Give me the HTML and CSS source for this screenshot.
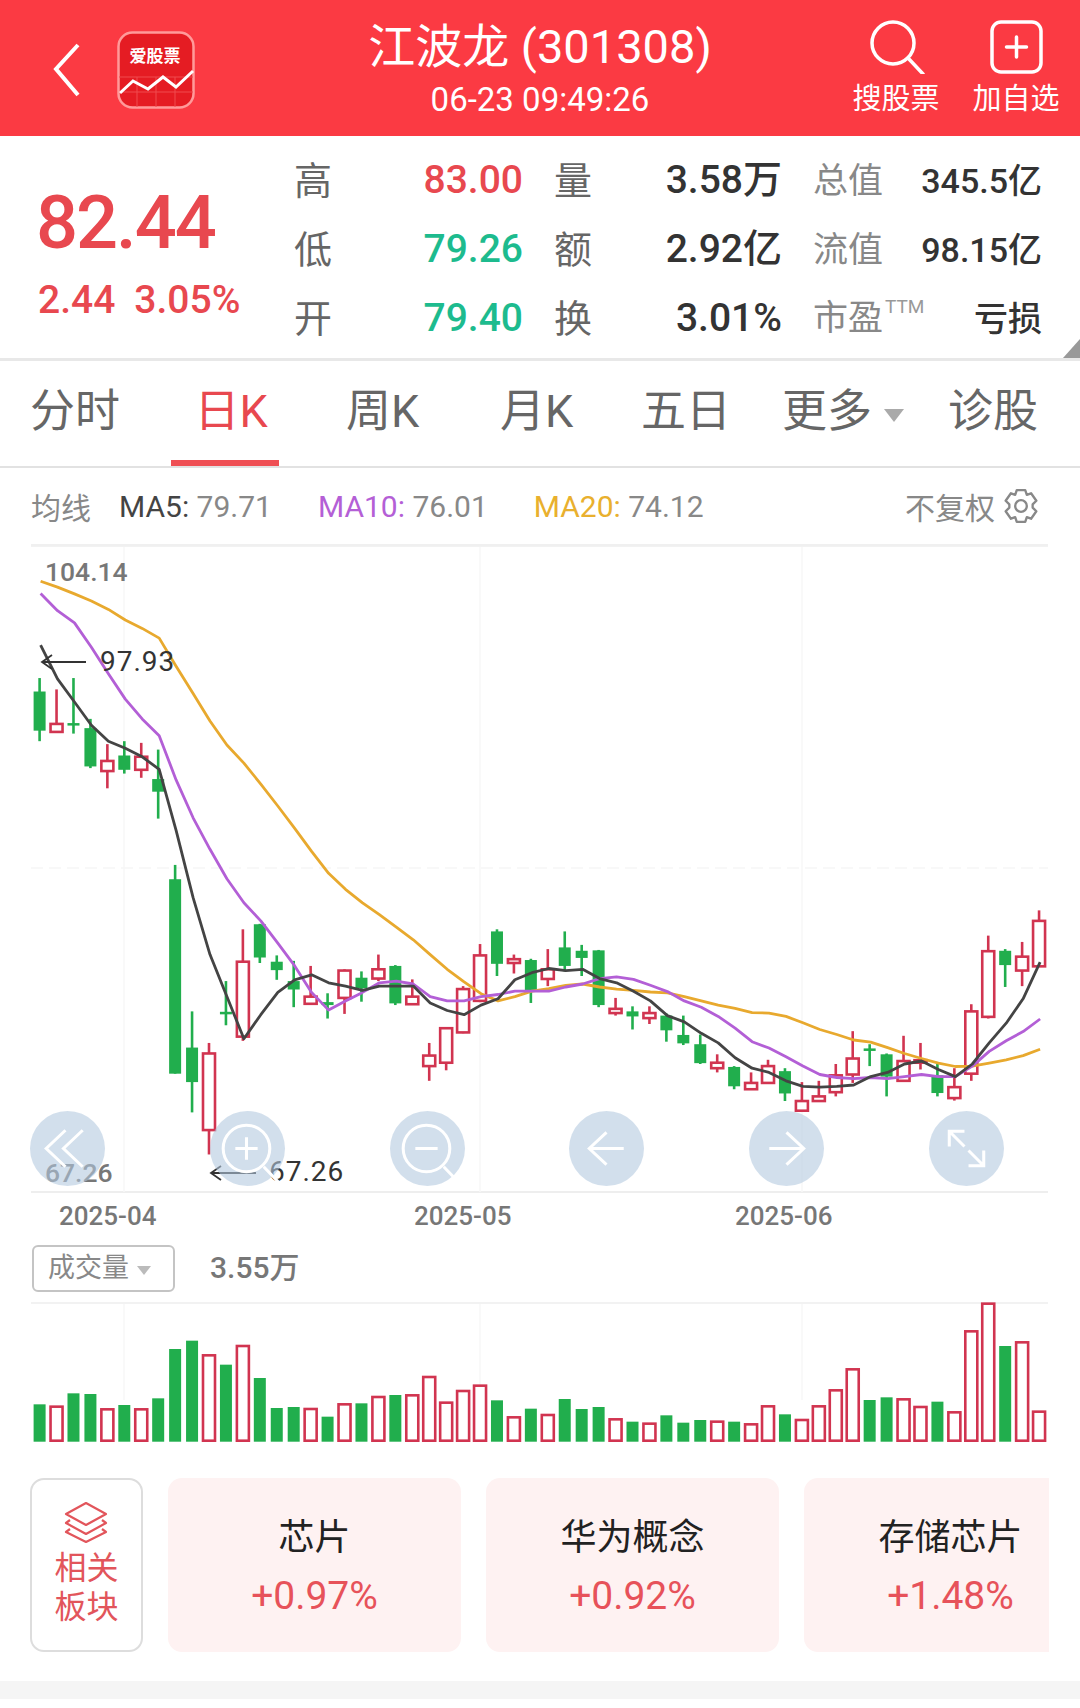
FILE: index.html
```html
<!DOCTYPE html>
<html lang="zh-CN">
<head>
    <meta charset="UTF-8">
    <meta name="viewport" content="width=device-width, initial-scale=1.0">
    <title>江波龙 (301308)</title>
    <link rel="stylesheet" href="styles.css">
</head>
<body>
    <div class="header">
        <div class="header-left">
            <svg class="back-icon" width="28" height="54" viewBox="0 0 28 54" fill="none" stroke="#fff" stroke-width="4"><path d="M25 2L3 26l22 26"/></svg>
            <svg class="logo" width="78" height="78" viewBox="0 0 78 78">
                <rect x="1.5" y="1.5" width="75" height="75" rx="14" fill="#e51c23" stroke="#ff9a9a" stroke-width="2.5"/>
                <path d="M2 46H76M20 46V76M39 46V76M58 46V76M2 61H76" stroke="#f04a4e" stroke-width="1"/>
                <text class="logo-text" x="38" y="31" text-anchor="middle">爱股票</text>
                <path d="M3 62l13-12 15 8 15-12 13 10 17-16" fill="none" stroke="#fff" stroke-width="3"/>
            </svg>
        </div>
        <div class="header-title">
            <div class="stock-name">江波龙 (301308)</div>
            <div class="stock-time">06-23 09:49:26</div>
        </div>
        <div class="header-actions">
            <div class="action">
                <svg width="58" height="54" viewBox="0 0 58 54" fill="none" stroke="#fff" stroke-width="3.5" stroke-linecap="round"><circle cx="26" cy="23" r="21"/><path d="M41 38l15 16"/></svg>
                <span>搜股票</span>
            </div>
            <div class="action">
                <svg width="54" height="54" viewBox="0 0 54 54" fill="none" stroke="#fff" stroke-width="3.5" stroke-linecap="round"><rect x="3" y="2" width="49" height="50" rx="9"/><path d="M27.5 17V37M17.5 27H37.5"/></svg>
                <span>加自选</span>
            </div>
        </div>
    </div>

    <div class="quote">
        <div class="price-box">
            <div class="price">82.44</div>
            <div class="change"><span>2.44</span><span>3.05%</span></div>
        </div>
        <div class="quote-grid">
            <div class="q-label">高</div><div class="q-val red">83.00</div>
            <div class="q-label">量</div><div class="q-val">3.58万</div>
            <div class="q-label small">总值</div><div class="q-val small">345.5亿</div>

            <div class="q-label">低</div><div class="q-val green">79.26</div>
            <div class="q-label">额</div><div class="q-val">2.92亿</div>
            <div class="q-label small">流值</div><div class="q-val small">98.15亿</div>

            <div class="q-label">开</div><div class="q-val green">79.40</div>
            <div class="q-label">换</div><div class="q-val">3.01%</div>
            <div class="q-label small pe">市盈<sup>TTM</sup></div><div class="q-val small">亏损</div>
        </div>
        <div class="corner"></div>
    </div>

    <div class="tabs">
        <div class="tab">分时</div>
        <div class="tab active">日K</div>
        <div class="tab">周K</div>
        <div class="tab">月K</div>
        <div class="tab">五日</div>
        <div class="tab">更多<i class="tab-caret"></i></div>
        <div class="tab">诊股</div>
    </div>

    <div class="ma-row">
        <span class="ma-title">均线</span>
        <span class="ma ma5"><b>MA5:</b> 79.71</span>
        <span class="ma ma10"><b>MA10:</b> 76.01</span>
        <span class="ma ma20"><b>MA20:</b> 74.12</span>
        <span class="adjust">不复权
            <svg width="36" height="36" viewBox="0 0 34 34" fill="none" stroke="#888" stroke-width="2.2" stroke-linejoin="round"><path d="M13 2h8l1.500 4.500 4-1.500 5 7-3.500 3.500v3l3.500 3.500-5 7-4-1.500L21 32h-8l-1.500-4.500-4 1.500-5-7L6 18.500v-3L2.500 12l5-7 4 1.500z"/><circle cx="17" cy="17" r="5.500"/></svg>
        </span>
    </div>

    <div class="chart">
        <svg id="kline" width="1080" height="647" viewBox="0 546 1080 647"></svg>
        <span class="axis-label high">104.14</span>
        <span class="axis-label low">67.26</span>
        <span class="mark mark-high">97.93</span>
        <span class="mark mark-low">67.26</span>
        <div class="chart-btns">
            <svg class="chart-btn" viewBox="-37 -37 74 74"><path d="M-2-18l-19 18 19 18M15-18l-19 18 19 18"/></svg>
            <svg class="chart-btn" viewBox="-37 -37 74 74"><circle cx="-1" cy="0" r="23"/><path d="M16 18l22 23M-12 0h22M-1-11v22"/></svg>
            <svg class="chart-btn" viewBox="-37 -37 74 74"><circle cx="-1" cy="0" r="23"/><path d="M16 18l22 23M-12 0h22"/></svg>
            <svg class="chart-btn" viewBox="-37 -37 74 74"><path d="M17 0h-34M0-16l-17 16 17 16"/></svg>
            <svg class="chart-btn" viewBox="-37 -37 74 74"><path d="M-17 0h34M0-16l17 16-17 16"/></svg>
            <svg class="chart-btn" viewBox="-37 -37 74 74"><path d="M-17-17L-2-2M-17-2v-15h15M17 17L2 2M17 2v15H2"/></svg>
        </div>
    </div>

    <div class="dates">
        <span>2025-04</span>
        <span>2025-05</span>
        <span>2025-06</span>
    </div>

    <div class="vol-head">
        <div class="vol-select">成交量<i class="vol-caret"></i></div>
        <div class="vol-value">3.55万</div>
    </div>
    <svg id="volume" width="1080" height="140" viewBox="0 1302 1080 140"></svg>

    <div class="sectors">
        <div class="sector-link">
            <svg width="44" height="42" viewBox="0 0 44 42" fill="none" stroke="#e2555b" stroke-width="2.200" stroke-linejoin="round"><path d="M22 2L42 13 22 24 2 13z"/><path d="M6 19l-4 3 20 11 20-11-4-3"/><path d="M6 28l-4 3 20 10 20-10-4-3"/></svg>
            <span>相关<br>板块</span>
        </div>
        <div class="sector-card"><div class="sector-name">芯片</div><div class="sector-pct">+0.97%</div></div>
        <div class="sector-card"><div class="sector-name">华为概念</div><div class="sector-pct">+0.92%</div></div>
        <div class="sector-card"><div class="sector-name">存储芯片</div><div class="sector-pct">+1.48%</div></div>
    </div>

    <div class="bottom-band"></div>

    <script src="chart.js"></script>
</body>
</html>
```

FILE: styles.css
```css
body {
    width: 1080px;
    height: 1708px;
    margin: 0;
    overflow: hidden;
    background: #fff;
    font-family: Roboto, "Noto Sans CJK SC", sans-serif;
    color: #333;
}

.header {
    height: 136px;
    display: grid;
    grid-template-columns: 1fr auto 1fr;
    background: #fb3a43;
    color: #fff;
}

.header-left {
    display: flex;
    align-items: center;
    gap: 36px;
    padding-left: 53px;
    padding-top: 4px;
}

.logo-text {
    font-size: 17px;
    font-weight: 700;
    fill: #fff;
}

.header-title {
    padding-top: 19px;
    text-align: center;
}

.stock-name {
    font-size: 47px;
    line-height: 56px;
}

.stock-time {
    margin-top: 8px;
    font-size: 33px;
    line-height: 34px;
}

.header-actions {
    display: flex;
    justify-content: flex-end;
    gap: 32px;
    padding: 20px 20px 0 0;
}

.action {
    width: 88px;
    display: flex;
    flex-direction: column;
    align-items: center;
}

.action span {
    margin-top: 9px;
    font-size: 29px;
    line-height: 32px;
    white-space: nowrap;
}

.quote {
    position: relative;
    height: 222px;
    display: flex;
    border-bottom: 3px solid #e8e8e8;
}

.price-box {
    width: 294px;
    padding: 45px 0 0 36px;
    box-sizing: border-box;
    color: #e8484f;
}

.price {
    font-size: 74px;
    font-weight: 500;
    line-height: 84px;
    letter-spacing: -2px;
}

.change {
    display: flex;
    gap: 19px;
    margin: 13px 0 0 2px;
    font-size: 39px;
    font-weight: 500;
    line-height: 44px;
}

.quote-grid {
    display: grid;
    grid-template-columns: 38px 191px 69px 190px 101px 159px;
    grid-auto-rows: 69px;
    align-items: center;
    padding-top: 10px;
}

.q-label {
    font-size: 38px;
    color: #666;
    text-align: right;
    line-height: 1;
}

.q-label.small {
    margin-top: 2px;
    font-size: 35px;
    color: #888;
    position: relative;
    white-space: nowrap;
}

.q-label.pe {
    margin-top: 0;
    text-align: left;
    padding-left: 31px;
}

.q-label sup {
    position: absolute;
    top: -4px;
    left: 103px;
    font-size: 19px;
    line-height: 1;
    color: #999;
}

.q-val {
    font-size: 39px;
    font-weight: 500;
    text-align: right;
    line-height: 1;
}

.q-val.small {
    font-size: 34px;
}

.q-val.red {
    color: #e8484f;
}

.q-val.green {
    color: #1dbb8e;
}

.corner {
    position: absolute;
    right: 0;
    bottom: 0;
    border-style: solid;
    border-width: 0 0 19px 17px;
    border-color: transparent transparent #999 transparent;
}

.tabs {
    height: 105px;
    display: grid;
    grid-template-columns: 150px 162px 141px 167px 132px 182px 118px;
    border-bottom: 2px solid #e2e2e2;
    font-size: 45px;
    color: #666;
}

.tab {
    position: relative;
    text-align: center;
    line-height: 102px;
}

.tab.active {
    color: #e8484f;
}

.tab.active::after {
    content: "";
    position: absolute;
    left: 21px;
    bottom: 0;
    width: 108px;
    height: 6px;
    background: #ef4f54;
}

.tab-caret {
    display: inline-block;
    margin-left: 12px;
    vertical-align: 5px;
    border-style: solid;
    border-width: 13px 10px 0;
    border-color: #aaa transparent transparent;
}

.ma-row {
    height: 78px;
    margin: 0 32px 0 31px;
    display: flex;
    align-items: center;
    border-bottom: 2px solid #f0f0f0;
    box-sizing: border-box;
    font-size: 30px;
    color: #888;
    white-space: nowrap;
}

.ma b {
    font-weight: 400;
}

.ma5 {
    margin-left: 28px;
}

.ma5 b {
    color: #444;
}

.ma10 {
    margin-left: 46px;
}

.ma10 b {
    color: #b45fd6;
}

.ma20 {
    margin-left: 46px;
}

.ma20 b {
    color: #e9b02e;
}

.adjust {
    margin-left: auto;
    display: flex;
    align-items: center;
    gap: 8px;
    padding-right: 9px;
}

.chart {
    position: relative;
    height: 647px;
}

.chart svg {
    display: block;
}

.axis-label,
.mark {
    position: absolute;
    line-height: 30px;
    font-size: 26.5px;
}

.axis-label {
    left: 45px;
    font-weight: 500;
    color: #777;
}

.axis-label.high {
    top: 11px;
}

.axis-label.low {
    top: 612px;
}

.mark {
    font-size: 28px;
    letter-spacing: 1px;
    color: #333;
}

.mark-high {
    left: 100px;
    top: 101px;
}

.mark-low {
    left: 269px;
    top: 611px;
}

.chart-btns {
    position: absolute;
    left: 30px;
    right: 76px;
    top: 565px;
    display: flex;
    justify-content: space-between;
}

.chart-btn {
    width: 75px;
    height: 75px;
    border-radius: 50%;
    background: rgba(178, 200, 222, 0.58);
    overflow: visible;
    fill: none;
    stroke: #fff;
    stroke-width: 3;
}

.dates {
    height: 52px;
    display: grid;
    grid-template-columns: 355px 321px auto;
    padding-left: 59px;
    font-size: 26px;
    font-weight: 500;
    line-height: 46px;
    color: #777;
}

.vol-head {
    height: 57px;
    display: flex;
    gap: 35px;
    padding-left: 32px;
}

.vol-select {
    width: 143px;
    height: 47px;
    box-sizing: border-box;
    border: 2px solid #c4c4c4;
    border-radius: 6px;
    font-size: 27px;
    line-height: 43px;
    padding-left: 14px;
    color: #888;
}

.vol-caret {
    display: inline-block;
    margin-left: 8px;
    vertical-align: 2px;
    border-style: solid;
    border-width: 9px 7px 0;
    border-color: #bbb transparent transparent;
}

.vol-value {
    font-size: 30px;
    font-weight: 500;
    line-height: 45px;
    color: #777;
}

#volume {
    display: block;
}

.sectors {
    width: 1019px;
    height: 174px;
    margin: 36px 0 0 30px;
    display: flex;
    gap: 25px;
    overflow: hidden;
}

.sector-link {
    flex: none;
    width: 113px;
    height: 174px;
    box-sizing: border-box;
    border: 2px solid #ddd;
    border-radius: 14px;
    display: flex;
    flex-direction: column;
    align-items: center;
    padding-top: 21px;
    font-size: 32px;
    line-height: 39px;
    text-align: center;
    color: #e2555b;
}

.sector-link svg {
    margin-right: 2px;
}

.sector-link span {
    margin-top: 6px;
}

.sector-card {
    flex: none;
    width: 293px;
    height: 174px;
    border-radius: 14px;
    background: #fef2f2;
    text-align: center;
}

.sector-name {
    margin-top: 36px;
    font-size: 36px;
    line-height: 48px;
    color: #222;
}

.sector-pct {
    margin-top: 12px;
    font-size: 39px;
    line-height: 44px;
    color: #e7525a;
}

.bottom-band {
    height: 18px;
    margin-top: 29px;
    background: #f5f5f5;
}
```

FILE: chart.js
```js
// y values below were read off the chart at its display scale
var K_SCALE = 2.376;
var STEP = 16.94;
var NS = 'http://www.w3.org/2000/svg';

// kind, high, body top, body bottom, low
var candles = [
    'G,328,360,453,478', 'R,355,437,456,456', 'G,328,435,440,460', 'G,425,447,538,542',
    'R,485,525,549,590', 'G,478,512,546,555', 'R,482,515,546,565', 'G,498,568,598,662',
    'G,772,806,1268,1268', 'G,1120,1206,1288,1360', 'R,1195,1220,1402,1460', 'G,1048,1121,1127,1153',
    'R,925,1002,1180,1190', 'G,912,913,992,1005', 'G,987,1002,1022,1045', 'G,1000,1048,1068,1110',
    'R,1012,1085,1102,1102', 'G,1077,1098,1105,1137', 'R,1020,1023,1088,1126', 'G,1025,1040,1065,1097',
    'R,985,1020,1042,1048', 'G,1010,1012,1101,1105', 'R,1044,1085,1103,1103', 'R,1195,1225,1250,1285',
    'R,1160,1160,1242,1260', 'R,1060,1067,1170,1172', 'R,960,987,1095,1098', 'G,925,930,1007,1036',
    'R,985,996,1005,1030', 'G,995,998,1070,1100', 'R,972,1020,1043,1060', 'G,930,968,1012,1025',
    'G,962,976,993,1036', 'G,974,975,1105,1110', 'R,1088,1114,1124,1130', 'G,1108,1120,1132,1163',
    'R,1108,1124,1136,1150', 'G,1125,1130,1165,1192', 'G,1130,1176,1196,1200', 'G,1175,1198,1243,1245',
    'R,1222,1242,1255,1265', 'G,1250,1252,1298,1305', 'R,1265,1290,1305,1305', 'R,1235,1250,1290,1292',
    'G,1255,1262,1315,1333', 'R,1288,1333,1356,1356', 'R,1285,1322,1333,1335', 'R,1245,1272,1312,1322',
    'R,1167,1232,1270,1290', 'G,1198,1208,1214,1250', 'G,1220,1222,1275,1322', 'R,1178,1238,1285,1287',
    'R,1195,1236,1242,1258', 'G,1245,1272,1314,1322', 'R,1255,1300,1326,1332', 'R,1103,1120,1268,1285',
    'R,940,977,1133,1137', 'G,972,976,1010,1062', 'R,955,990,1023,1060', 'R,880,905,1013,1013'
];

var ma5 = [250, 330, 385, 440, 478, 495, 515, 545, 690, 850, 985, 1085, 1185, 1128, 1075, 1045, 1033, 1052, 1060, 1070,
    1060, 1060, 1060, 1100, 1118, 1128, 1105, 1090, 1045, 1028, 1018, 1023, 1020, 1042, 1052, 1072, 1095, 1130, 1145, 1172,
    1195, 1230, 1255, 1265, 1285, 1298, 1300, 1298, 1295, 1275, 1265, 1245, 1238, 1258, 1275, 1245, 1195, 1148, 1090, 1003];
var ma10 = [127, 168, 197, 255, 318, 378, 425, 465, 570, 660, 735, 805, 862, 905, 958, 1012, 1075, 1117, 1095, 1075,
    1052, 1048, 1055, 1085, 1095, 1095, 1085, 1080, 1072, 1072, 1072, 1062, 1055, 1042, 1038, 1044, 1058, 1073, 1095, 1110,
    1132, 1160, 1192, 1207, 1228, 1250, 1270, 1277, 1280, 1277, 1280, 1275, 1270, 1275, 1275, 1250, 1215, 1190, 1168, 1138];
var ma20 = [98, 112, 128, 145, 165, 190, 210, 233, 300, 365, 430, 487, 530, 580, 632, 685, 740, 792, 830, 862,
    890, 920, 950, 985, 1020, 1050, 1078, 1095, 1085, 1072, 1066, 1058, 1055, 1062, 1067, 1070, 1074, 1076, 1085, 1095,
    1105, 1113, 1123, 1124, 1132, 1147, 1163, 1175, 1188, 1193, 1206, 1220, 1232, 1243, 1251, 1250, 1243, 1235, 1225, 1210];

// bar tops, volume chart is read at 3x
var volTops = [613, 617, 580, 582, 625, 615, 625, 595, 447, 422, 463, 494, 435, 534, 624, 621, 624, 650, 610, 610,
    588, 585, 583, 528, 605, 570, 554, 601, 649, 626, 642, 597, 627, 621, 655, 665, 668, 646, 668, 660,
    662, 665, 670, 616, 643, 657, 616, 568, 505, 600, 592, 595, 618, 605, 634, 391, 308, 438, 424, 632];

function px(d) { return 540 + d / K_SCALE; }
function xAt(i) { return 39.6 + STEP * i; }

function add(svg, tag, attrs) {
    var el = document.createElementNS(NS, tag);
    for (var k in attrs) el.setAttribute(k, attrs[k]);
    svg.appendChild(el);
    return el;
}

function hLine(svg, y, color, dash) {
    var a = { x1: 31, x2: 1048, y1: y, y2: y, stroke: color, 'stroke-width': 1.5 };
    if (dash) a['stroke-dasharray'] = dash;
    add(svg, 'line', a);
}

function vLines(svg, y1, y2) {
    [124, 480, 802].forEach(function (x) {
        add(svg, 'line', { x1: x, x2: x, y1: y1, y2: y2, stroke: '#f7f7f7', 'stroke-width': 1.5 });
    });
}

function drawKline() {
    var svg = document.getElementById('kline');
    hLine(svg, 546, '#eee');
    hLine(svg, 1192, '#e8e8e8');
    hLine(svg, 868, '#f6f6f6', '12 6');
    vLines(svg, 547, 1192);

    candles.forEach(function (row, i) {
        var c = row.split(',');
        var x = xAt(i);
        var color = c[0] == 'G' ? '#21ae4d' : '#d13450';
        var high = px(+c[1]), top = px(+c[2]), bot = px(+c[3]), low = px(+c[4]);
        add(svg, 'line', { x1: x, x2: x, y1: high, y2: low, stroke: color, 'stroke-width': 2.6 });
        if (c[0] == 'G') {
            add(svg, 'rect', { x: x - 6, y: top, width: 12, height: Math.max(bot - top, 2.5), fill: color });
        } else {
            add(svg, 'rect', { x: x - 6, y: top, width: 12, height: bot - top, fill: '#fff', stroke: color, 'stroke-width': 2.6 });
        }
    });

    [[ma20, '#e8a92e'], [ma10, '#b35fd6'], [ma5, '#444']].forEach(function (m) {
        var pts = m[0].map(function (d, i) { return (xAt(i) + 1).toFixed(1) + ',' + px(d).toFixed(1); });
        add(svg, 'polyline', { points: pts.join(' '), fill: 'none', stroke: m[1], 'stroke-width': 2.8, 'stroke-linejoin': 'round' });
    });

    // arrows next to the high and low marks
    add(svg, 'path', { d: 'M86 662H42M52 655l-10 7 10 7M256 1173H211M221 1166l-10 7 10 7', fill: 'none', stroke: '#333', 'stroke-width': 1.8 });
}

function drawVolume() {
    var svg = document.getElementById('volume');
    var bottom = 1441.7;
    hLine(svg, 1303, '#eee');
    vLines(svg, 1304, 1400);
    volTops.forEach(function (d, i) {
        var x = xAt(i);
        var y = 1200 + d / 3;
        if (candles[i].charAt(0) == 'G') {
            add(svg, 'rect', { x: x - 6, y: y, width: 12, height: bottom - y, fill: '#21ae4d' });
        } else {
            add(svg, 'rect', { x: x - 6, y: y + 1, width: 12, height: bottom - y - 2, fill: '#fff', stroke: '#d13450', 'stroke-width': 2.6 });
        }
    });
}

drawKline();
drawVolume();
```
